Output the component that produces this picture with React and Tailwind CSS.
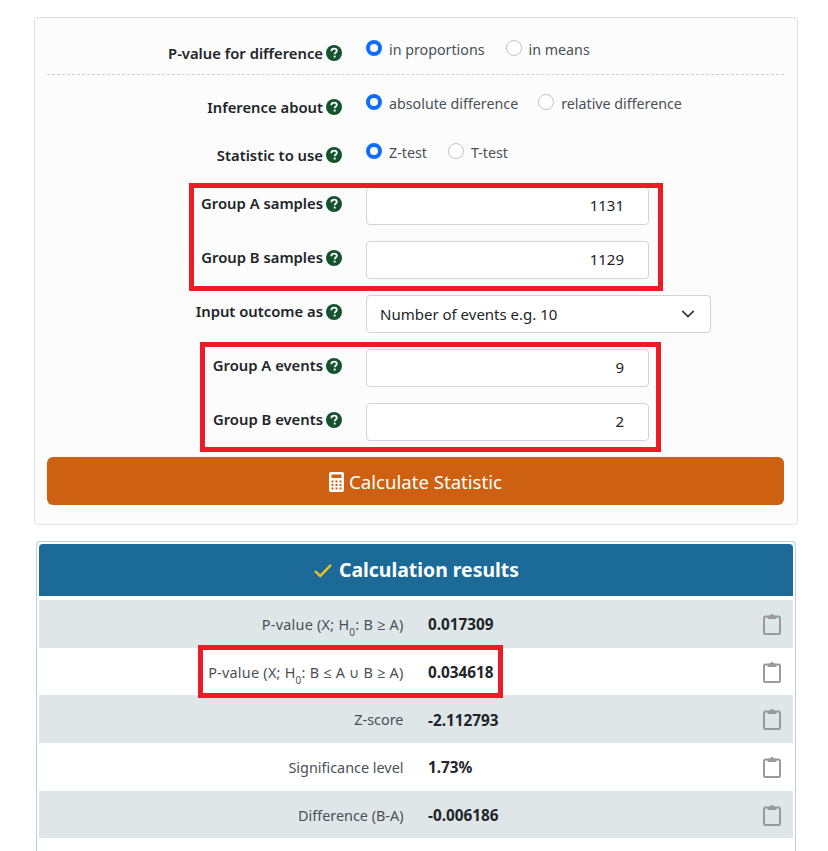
import React from 'react';

function Help() {
  return (
    <svg viewBox="0 0 16 16" className="w-4 h-4 shrink-0 ml-[3px]">
      <circle cx="8" cy="8" r="8" fill="#14532d" />
      <path d="M5.3 6.2c.1-1.6 1.1-2.6 2.8-2.6 1.6 0 2.7.9 2.7 2.2 0 1-.6 1.5-1.3 2-.6.4-.8.7-.8 1.4" fill="none" stroke="#fff" strokeWidth="1.8" />
      <rect x="7.7" y="10.6" width="1.9" height="1.9" fill="#fff" />
    </svg>
  );
}

function Radio({ checked, label, className = '' }) {
  return (
    <label className={`flex items-center ${className}`}>
      {checked ? (
        <span className="w-4 h-4 rounded-full border-[4.5px] border-[#0d6efd] bg-white shrink-0" />
      ) : (
        <span className="w-4 h-4 rounded-full border border-[#bfc4c9] bg-white shrink-0" />
      )}
      <span className="ml-[7px] mt-[4px] text-[14.25px] text-[#495057] leading-6">{label}</span>
    </label>
  );
}

function Row({ label, h = 'h-[54px]', labelH = 'h-[33px]', children }) {
  return (
    <div className={`flex ${h}`}>
      <div className={`w-[295px] flex justify-end items-center font-semibold text-[14.8px] text-[#212529] ${labelH}`}>
        {label}
        <Help />
      </div>
      <div className="ml-[24px] flex-1">{children}</div>
    </div>
  );
}

function NumInput({ value }) {
  return (
    <div className="w-[283px] h-[38px] bg-white border border-[#ced4da] rounded flex items-center justify-end pr-[24px] pb-[2px] text-[15px] text-[#212529]">
      {value}
    </div>
  );
}

function Clipboard() {
  return (
    <svg viewBox="0 0 18 22" className="w-[18px] h-[22px]" fill="none" stroke="#9a9a9a" strokeWidth="2">
      <rect x="1" y="3.5" width="16" height="17.5" rx="1.5" />
      <path d="M5 5.5h8V3.2h-2.3a1.7 1.7 0 0 0-3.4 0H5z" fill="#9a9a9a" stroke="#9a9a9a" strokeWidth="1" />
    </svg>
  );
}

function Result({ label, value, shaded, wide }) {
  return (
    <div className={`flex items-center h-[47.7px] ${shaded ? 'bg-[#dfe6e8]' : 'bg-white'}`}>
      <div className={`w-[364.5px] pt-[2px] text-right text-[14.4px] text-[#495057] ${wide ? 'tracking-[0.25px]' : ''}`}>{label}</div>
      <div className="ml-[24.5px] w-[335px] pt-[2px] font-bold text-[15.3px] text-[#212529]">{value}</div>
      <Clipboard />
    </div>
  );
}

const H0 = () => (
  <>H<sub className="text-[10px] align-sub leading-none">0</sub></>
);

export default function App() {
  return (
    <div className="relative w-[828px] h-[851px] overflow-hidden bg-white pt-[17px] font-['Noto_Sans','Open_Sans',sans-serif]">
      <div className="ml-[34px] w-[764px] h-[508px] bg-[#fcfcfc] border border-[#dfe1e3] rounded pl-[12px] pr-[13px] pt-[11px]">
        <div className="flex h-[46px] border-b border-dashed border-[#cfcfcf]">
          <div className="w-[295px] flex justify-end items-center font-semibold text-[14.8px] text-[#212529] h-[38px] pt-[10px]">
            P-value for difference
            <Help />
          </div>
          <div className="ml-[24px] flex items-start pt-[5px] h-[38px]">
            <Radio checked label="in proportions" />
            <Radio label="in means" className="ml-[21px]" />
          </div>
        </div>
        <div className="h-[14px]" />
        <Row label="Inference about" h="h-[48px]" labelH="h-[36px]">
          <div className="flex -mt-[1px]">
            <Radio checked label="absolute difference" />
            <Radio label="relative difference" className="ml-[20px]" />
          </div>
        </Row>
        <Row label="Statistic to use" h="h-[50px]" labelH="h-[36px]">
          <div className="flex">
            <Radio checked label="Z-test" />
            <Radio label="T-test" className="ml-[21px]" />
          </div>
        </Row>
        <Row label="Group A samples"><NumInput value="1131" /></Row>
        <Row label="Group B samples"><NumInput value="1129" /></Row>
        <Row label="Input outcome as">
          <div className="w-[345px] h-[38px] bg-white border border-[#ced4da] rounded flex items-center justify-between pl-[13px] pr-[15px] text-[15px] text-[#212529]">
            Number of events e.g. 10
            <svg viewBox="0 0 16 16" className="w-[14px] h-[14px]" fill="none" stroke="#343a40" strokeWidth="2" strokeLinecap="round" strokeLinejoin="round">
              <path d="M2 5l6 6 6-6" />
            </svg>
          </div>
        </Row>
        <Row label="Group A events"><NumInput value="9" /></Row>
        <Row label="Group B events"><NumInput value="2" /></Row>
        <div className="h-[48px] pt-[2px] bg-[#cd6111] rounded-md flex items-center justify-center text-white text-[18.6px]">
          <svg viewBox="0 0 15 20" className="w-[15px] h-[20px] mr-[5px]" fill="#fff">
            <path fillRule="evenodd" d="M2 0h11a2 2 0 0 1 2 2v16a2 2 0 0 1-2 2H2a2 2 0 0 1-2-2V2a2 2 0 0 1 2-2zm.5 2.5v3.5h10V2.5zm0 6v2h2v-2zm4 0v2h2v-2zm4 0v2h2v-2zm-8 3.5v2h2v-2zm4 0v2h2v-2zm4 0v2h2v-2zm-8 3.5v2h2v-2zm4 0v2h2v-2zm4 0v2h2v-2z" />
          </svg>
          Calculate Statistic
        </div>
      </div>

      <div className="ml-[36px] mt-[16px] w-[760px] h-[320px] border border-b-0 border-[#b5d0e0] rounded-t px-[2px] pt-[2px]">
        <div className="h-[52px] bg-[#1c6a98] rounded-t flex items-center justify-center text-white font-bold text-[19.4px]">
          <svg viewBox="0 0 20 16" className="w-[20px] h-[15px] mr-[6px]" fill="none" stroke="#f5c518" strokeWidth="2.5">
            <path d="M1.5 8.5l5.5 5.5L18.5 2" />
          </svg>
          Calculation results
        </div>
        <div className="h-[4px]" />
        <Result shaded wide label={<>P-value (X; <H0 />: B ≥ A)</>} value="0.017309" />
        <Result wide label={<>P-value (X; <H0 />: B ≤ A ∪ B ≥ A)</>} value="0.034618" />
        <Result shaded label="Z-score" value="-2.112793" />
        <Result label="Significance level" value="1.73%" />
        <Result shaded label="Difference (B-A)" value="-0.006186" />
      </div>

      {/* red annotation boxes drawn on top of the screenshot */}
      <div className="absolute left-[189px] top-[183px] w-[474px] h-[108px] border-[5px] border-[#ed1c24]" />
      <div className="absolute left-[200px] top-[342px] w-[461px] h-[110px] border-[5px] border-[#ed1c24]" />
      <div className="absolute left-[198px] top-[645px] w-[305px] h-[53px] border-[5px] border-[#ed1c24]" />
    </div>
  );
}
